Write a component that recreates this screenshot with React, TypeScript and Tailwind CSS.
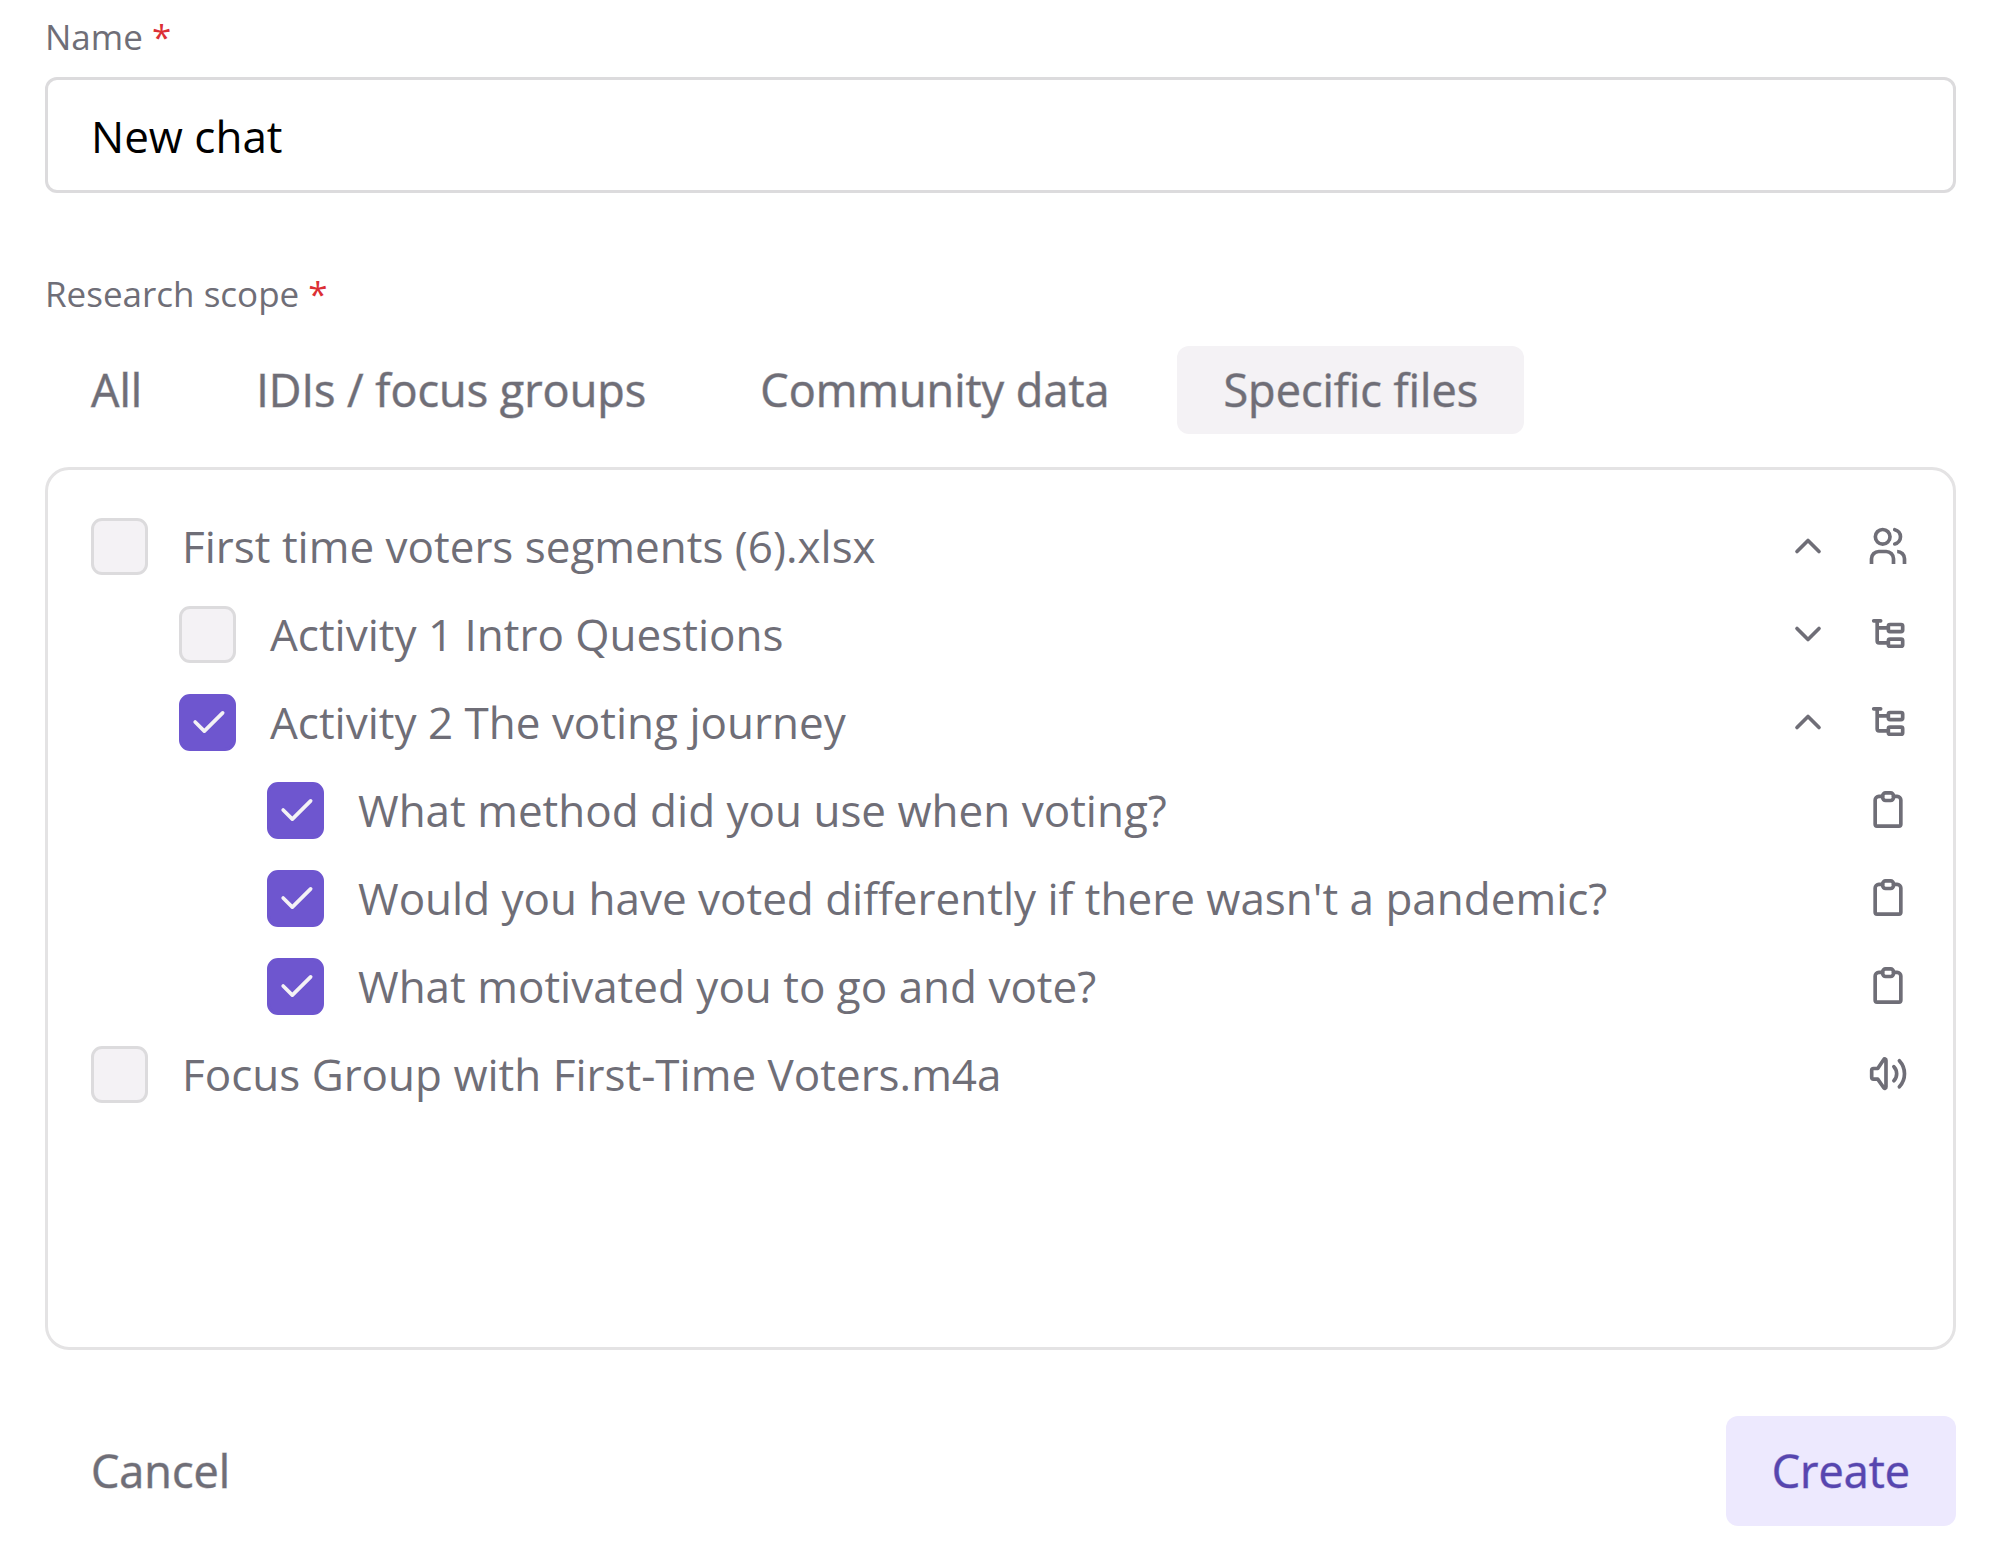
import { useState } from "react";
import type { ReactNode } from "react";

type FileRow = {
  id: string;
  label: string;
  level: number;
  icon: "users" | "tree" | "clipboard" | "audio";
  open?: boolean;
};

const rows: FileRow[] = [
  { id: "segments", label: "First time voters segments (6).xlsx", level: 0, icon: "users", open: true },
  { id: "activity-1", label: "Activity 1 Intro Questions", level: 1, icon: "tree", open: false },
  { id: "activity-2", label: "Activity 2 The voting journey", level: 1, icon: "tree", open: true },
  { id: "method", label: "What method did you use when voting?", level: 2, icon: "clipboard" },
  {
    id: "pandemic",
    label: "Would you have voted differently if there wasn't a pandemic?",
    level: 2,
    icon: "clipboard",
  },
  { id: "motivation", label: "What motivated you to go and vote?", level: 2, icon: "clipboard" },
  { id: "focus-group", label: "Focus Group with First-Time Voters.m4a", level: 0, icon: "audio" },
];

const tabs = ["All", "IDIs / focus groups", "Community data", "Specific files"];

const indents = ["", "pl-[88px]", "pl-[176px]"];

// Open Sans has no medium cut here, so buttons get a faint outline instead
const buttonText = "px-[46px] text-[45px]";
const grayOutline = "[-webkit-text-stroke:1px_#6f6e7780]";
const violetOutline = "[-webkit-text-stroke:1px_#5746af80]";

function Icon({ children, className = "" }: { children: ReactNode; className?: string }) {
  return (
    <svg
      viewBox="0 0 24 24"
      fill="none"
      stroke="currentColor"
      strokeWidth="2"
      strokeLinecap="round"
      strokeLinejoin="round"
      aria-hidden="true"
      className={`size-11 shrink-0 ${className}`}
    >
      {children}
    </svg>
  );
}

const icons = {
  users: (
    <Icon>
      <g strokeLinecap="butt">
        <circle cx="9.1" cy="7" r="4" />
        <path d="M3 21.8V19a4 4 0 0 1 4-4h4a4 4 0 0 1 4 4v2.8" />
        <path d="M21 21.8V19a4 4 0 0 0-4-4" />
        <path d="M15.7 3.1a4 4 0 0 1 0 7.8" strokeLinecap="round" />
      </g>
    </Icon>
  ),
  tree: (
    <Icon>
      <path d="M4.2 4.8H8M6.1 4.8V15.8a1 1 0 0 0 1 1h5M6.1 8.7h6" />
      <rect x="12.2" y="6.8" width="7.8" height="3.9" rx="0.9" />
      <rect x="12.2" y="14.8" width="7.8" height="3.9" rx="0.9" />
    </Icon>
  ),
  clipboard: (
    <Icon>
      <path d="M9 4.6H7A2 2 0 0 0 5 6.6V19.8a1 1 0 0 0 1 1h12a1 1 0 0 0 1-1V6.6a2 2 0 0 0-2-2h-2" />
      <rect x="9.1" y="2.7" width="5.9" height="4.1" rx="1.6" />
    </Icon>
  ),
  audio: (
    <Icon>
      <path d="M3.1 10a1 1 0 0 1 1-1h2.3L9.7 4.1a.65.65 0 0 1 1.2.4v14.6a.65.65 0 0 1-1.2.4L6.4 14.8H4.1a1 1 0 0 1-1-1Z" />
      <path d="M15.2 8a5.6 5.6 0 0 1 0 7.7" />
      <path d="M18.2 4.8a10.4 10.4 0 0 1 0 14.2" />
    </Icon>
  ),
};

function Row({
  row,
  checked,
  onToggle,
}: {
  row: FileRow;
  checked: boolean;
  onToggle: () => void;
}) {
  return (
    <li className={`flex h-[88px] items-center gap-9 ${indents[row.level]}`}>
      <label className="flex flex-1 items-center gap-[34px]">
        <span className="relative grid size-[57px] shrink-0 place-items-center">
          <input
            type="checkbox"
            checked={checked}
            onChange={onToggle}
            className="size-full appearance-none rounded-[11px] border-[3px] border-[#dcdbdd] bg-[#f4f2f5] checked:border-[#6e56cf] checked:bg-[#6e56cf]"
          />
          {checked && (
            <Icon className="pointer-events-none absolute text-[#f4f2f5]">
              <path d="M5 12l5 5L20 7" />
            </Icon>
          )}
        </span>
        {row.label}
      </label>
      {row.open !== undefined && (
        <button type="button" aria-label={row.open ? "Collapse" : "Expand"}>
          <Icon>
            <path d={row.open ? "M6 15l6-6 6 6" : "M6 9l6 6 6-6"} />
          </Icon>
        </button>
      )}
      {icons[row.icon]}
    </li>
  );
}

export default function App() {
  const [name, setName] = useState("New chat");
  const [tab, setTab] = useState("Specific files");
  const [selected, setSelected] = useState(["activity-2", "method", "pandemic", "motivation"]);

  const toggle = (id: string) =>
    setSelected((prev) => (prev.includes(id) ? prev.filter((x) => x !== id) : [...prev, id]));

  return (
    <form
      className="min-h-screen bg-white pt-[13px] pr-11 pb-10 pl-[45px] font-['Open_Sans',sans-serif] text-[44px] leading-[60px] text-[#6f6e77]"
      onSubmit={(e) => e.preventDefault()}
    >
      <label htmlFor="name" className="block text-[35px] leading-12">
        Name <span className="text-[#dc2f35]">*</span>
      </label>
      <input
        id="name"
        value={name}
        onChange={(e) => setName(e.target.value)}
        className="mt-4 block h-[116px] w-full rounded-xl border-[3px] border-[#dcdbdd] bg-white px-[43px] pt-0.5 text-black"
      />

      <div role="group" aria-labelledby="scope" className="mt-[77px]">
        <div id="scope" className="text-[35px] leading-12">
          Research scope <span className="text-[#dc2f35]">*</span>
        </div>
        <div className="mt-7 flex gap-[22px]">
          {tabs.map((item) => (
            <button
              key={item}
              type="button"
              aria-pressed={item === tab}
              onClick={() => setTab(item)}
              className={`h-[88px] rounded-xl ${buttonText} ${grayOutline} ${
                item === tab ? "bg-[#f4f2f5]" : ""
              }`}
            >
              {item}
            </button>
          ))}
        </div>

        <ul className="mt-[33px] min-h-[883px] rounded-3xl border-[3px] border-[#e4e3e4] px-[43px] py-8">
          {rows.map((row) => (
            <Row
              key={row.id}
              row={row}
              checked={selected.includes(row.id)}
              onToggle={() => toggle(row.id)}
            />
          ))}
        </ul>
      </div>

      <div className="mt-[66px] flex justify-between">
        <button type="button" className={`h-[110px] rounded-xl ${buttonText} ${grayOutline}`}>
          Cancel
        </button>
        <button
          type="submit"
          className={`h-[110px] rounded-xl bg-[#ede9fe] text-[#5746af] ${buttonText} ${violetOutline}`}
        >
          Create
        </button>
      </div>
    </form>
  );
}
